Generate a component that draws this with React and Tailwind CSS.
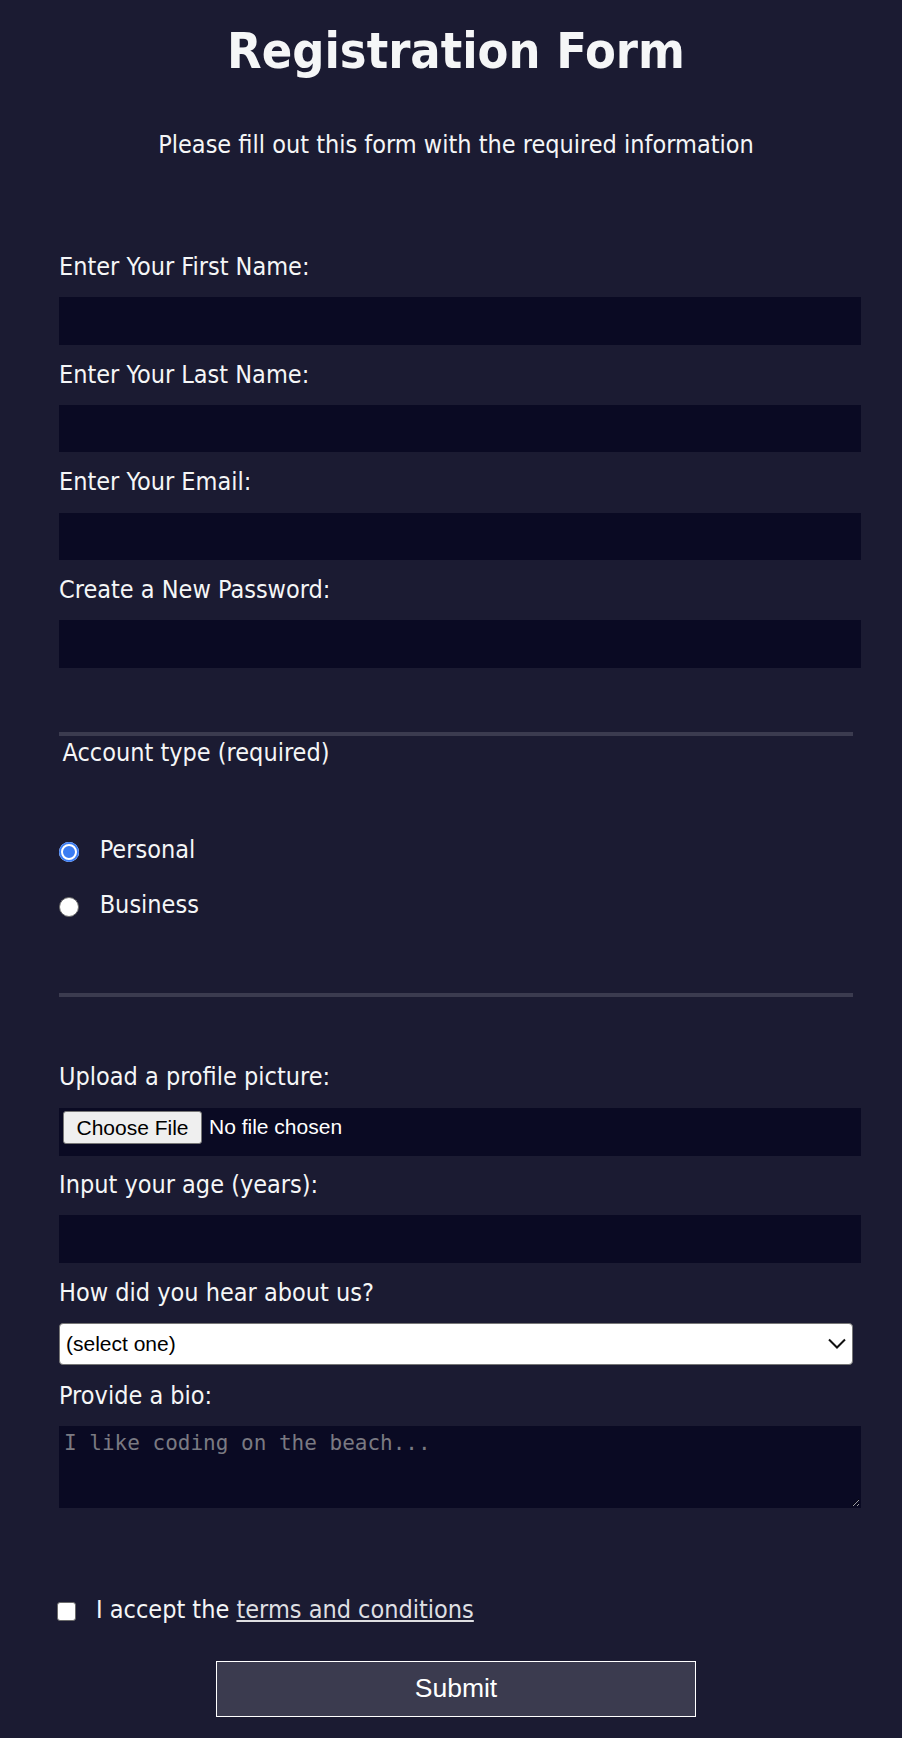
import { useState } from "react";

function Field({ label, type = "text", className = "" }) {
  return (
    <label className={`block ${className}`}>
      <span className="block text-[25px] leading-[30px]">{label}</span>
      <input
        type={type}
        className="block mt-[15.2px] w-[802px] h-[47.5px] bg-[#0a0a23] border border-[#0a0a23] text-white outline-none"
      />
    </label>
  );
}

export default function App() {
  const [account, setAccount] = useState("personal");
  const [accepted, setAccepted] = useState(false);

  return (
    <div className="min-h-screen bg-[#1b1b32] text-[#f5f6f7] font-['DejaVu_Sans_Condensed','DejaVu_Sans',sans-serif] pl-[10px]">
      {/* Header */}
      <h1 className="pt-[20.7px] text-center text-[50px] leading-[60px] font-bold">Registration Form</h1>
      <p className="mt-[49.65px] text-center text-[25px] leading-[30px]">
        Please fill out this form with the required information
      </p>

      <form className="mx-auto w-[794px] mt-[91.7px]" onSubmit={(e) => e.preventDefault()}>
        {/* Personal details */}
        <div className="pb-[64.15px] border-b-4 border-[#3b3b4f]">
          <Field label="Enter Your First Name:" />
          <Field label="Enter Your Last Name:" className="mt-[15px]" />
          <Field label="Enter Your Email:" type="email" className="mt-[15px]" />
          <Field label="Create a New Password:" type="password" className="mt-[15px]" />
        </div>

        {/* Account type */}
        <div className="pt-[2px] pb-[72.35px] border-b-4 border-[#3b3b4f]">
          <div className="pl-[3.5px] text-[25px] leading-[30px]">Account type (required)</div>
          <label className="mt-[67.3px] flex items-start text-[25px] leading-[30px] cursor-pointer">
            <input
              type="radio"
              name="account"
              checked={account === "personal"}
              onChange={() => setAccount("personal")}
              className="appearance-none mt-[6.65px] w-[20px] h-[20px] rounded-full bg-white border border-[#767676] checked:border-0 checked:bg-[#3b7cf2] checked:shadow-[inset_0_0_0_2px_#3b7cf2,inset_0_0_0_4px_#ffffff]"
            />
            <span className="ml-[20.7px]">Personal</span>
          </label>
          <label className="mt-[25px] flex items-start text-[25px] leading-[30px] cursor-pointer">
            <input
              type="radio"
              name="account"
              checked={account === "business"}
              onChange={() => setAccount("business")}
              className="appearance-none mt-[6.65px] w-[20px] h-[20px] rounded-full bg-white border-[1.5px] border-[#6b6b6b] checked:border-0 checked:bg-[#3b7cf2] checked:shadow-[inset_0_0_0_2px_#3b7cf2,inset_0_0_0_4px_#ffffff]"
            />
            <span className="ml-[20.7px]">Business</span>
          </label>
        </div>

        {/* Extra info */}
        <div className="pt-[65.75px]">
          <div>
            <span className="block text-[25px] leading-[30px]">Upload a profile picture:</span>
            <div className="mt-[15.25px] w-[802px] h-[48px] bg-[#0a0a23] pl-[4px] pt-[3px] flex items-start font-['Liberation_Sans',Arial,sans-serif] text-[21px]">
              <button
                type="button"
                className="h-[33.3px] w-[139px] bg-[#efefef] border border-[#767676] rounded-[3px] text-black leading-none"
              >
                Choose File
              </button>
              <span className="ml-[7px] h-[33.3px] flex items-center text-white">No file chosen</span>
            </div>
          </div>

          <label className="block mt-[14.65px]">
            <span className="block text-[25px] leading-[30px]">Input your age (years):</span>
            <input
              type="number"
              className="block mt-[14.95px] w-[802px] h-[47.4px] bg-[#0a0a23] border border-[#0a0a23] text-white outline-none"
            />
          </label>

          <div className="mt-[15px]">
            <span className="block text-[25px] leading-[30px]">How did you hear about us?</span>
            <div className="mt-[15.3px] w-[794px] h-[42px] bg-white border border-[#767676] rounded-[4px] pl-[6px] pr-[6px] flex items-center justify-between text-black font-['Liberation_Sans',Arial,sans-serif] text-[21px]">
              <span>(select one)</span>
              <svg width="18" height="11" viewBox="0 0 18 11" fill="none">
                <polyline points="1,1.5 9,9.5 17,1.5" stroke="#111" strokeWidth="2" />
              </svg>
            </div>
          </div>

          <label className="block mt-[16.35px]">
            <span className="block text-[25px] leading-[30px]">Provide a bio:</span>
            <textarea
              rows={3}
              placeholder="I like coding on the beach..."
              className="block mt-[14.65px] w-[802px] h-[82.7px] bg-[#0a0a23] border border-[#0a0a23] px-[4px] py-[3px] text-white placeholder:text-[#7a7a82] font-['DejaVu_Sans_Mono',monospace] text-[21px] leading-[26px] outline-none"
            />
          </label>

          {/* Terms */}
          <label className="mt-[86.65px] flex items-start text-[25px] leading-[30px] cursor-pointer">
            <input
              type="checkbox"
              checked={accepted}
              onChange={(e) => setAccepted(e.target.checked)}
              className="appearance-none -ml-[2.3px] mt-[6.65px] w-[19px] h-[19px] rounded-[3px] bg-white border-[1.5px] border-[#6b6b6b] checked:bg-[#3b7cf2]"
            />
            <span className="ml-[20.3px]">
              I accept the <a href="#" className="text-[#dfdfe2] underline">terms and conditions</a>
            </span>
          </label>

          <button
            type="submit"
            className="block mx-auto mt-[35.65px] w-[480px] h-[56px] bg-[#3b3b4f] border-[1.5px] border-white text-white font-['Liberation_Sans',Arial,sans-serif] text-[26.5px]"
          >
            Submit
          </button>
        </div>
      </form>
    </div>
  );
}
